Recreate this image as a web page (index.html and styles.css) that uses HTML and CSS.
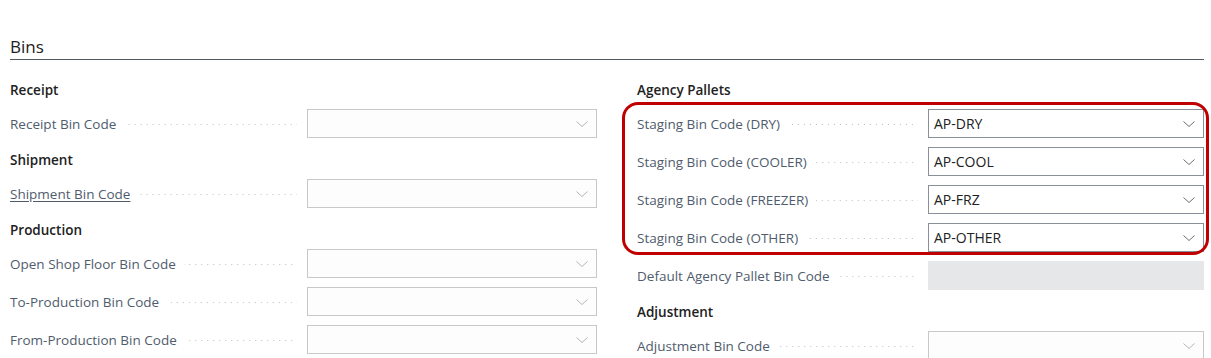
FILE: index.html
```html
<!DOCTYPE html>
<html lang="en">
<head>
<meta charset="utf-8">
<title>Bins</title>
<link rel="stylesheet" href="styles.css">
</head>
<body>
<div class="page">
  <h2 class="section-title">Bins</h2>
  <div class="columns">
    <div class="col col-left">
      <div class="group">
        <div class="group-title">Receipt</div>
        <div class="field">
          <span class="label">Receipt Bin Code</span><span class="leader"></span>
          <div class="input empty"><span class="value"></span><svg class="chev" viewBox="0 0 12 6"><path d="M0.5 0.5 L6 5.5 L11.5 0.5"/></svg></div>
        </div>
      </div>
      <div class="group">
        <div class="group-title">Shipment</div>
        <div class="field">
          <span class="label link">Shipment Bin Code</span><span class="leader"></span>
          <div class="input empty"><span class="value"></span><svg class="chev" viewBox="0 0 12 6"><path d="M0.5 0.5 L6 5.5 L11.5 0.5"/></svg></div>
        </div>
      </div>
      <div class="group">
        <div class="group-title">Production</div>
        <div class="field">
          <span class="label">Open Shop Floor Bin Code</span><span class="leader"></span>
          <div class="input empty"><span class="value"></span><svg class="chev" viewBox="0 0 12 6"><path d="M0.5 0.5 L6 5.5 L11.5 0.5"/></svg></div>
        </div>
        <div class="field">
          <span class="label">To-Production Bin Code</span><span class="leader"></span>
          <div class="input empty"><span class="value"></span><svg class="chev" viewBox="0 0 12 6"><path d="M0.5 0.5 L6 5.5 L11.5 0.5"/></svg></div>
        </div>
        <div class="field">
          <span class="label">From-Production Bin Code</span><span class="leader"></span>
          <div class="input empty"><span class="value"></span><svg class="chev" viewBox="0 0 12 6"><path d="M0.5 0.5 L6 5.5 L11.5 0.5"/></svg></div>
        </div>
      </div>
    </div>
    <div class="col col-right">
      <div class="group">
        <div class="group-title">Agency Pallets</div>
        <div class="highlight">
          <div class="field">
            <span class="label">Staging Bin Code (DRY)</span><span class="leader"></span>
            <div class="input filled"><span class="value">AP-DRY</span><svg class="chev" viewBox="0 0 12 6"><path d="M0.5 0.5 L6 5.5 L11.5 0.5"/></svg></div>
          </div>
          <div class="field">
            <span class="label">Staging Bin Code (COOLER)</span><span class="leader"></span>
            <div class="input filled"><span class="value">AP-COOL</span><svg class="chev" viewBox="0 0 12 6"><path d="M0.5 0.5 L6 5.5 L11.5 0.5"/></svg></div>
          </div>
          <div class="field">
            <span class="label">Staging Bin Code (FREEZER)</span><span class="leader"></span>
            <div class="input filled"><span class="value">AP-FRZ</span><svg class="chev" viewBox="0 0 12 6"><path d="M0.5 0.5 L6 5.5 L11.5 0.5"/></svg></div>
          </div>
          <div class="field">
            <span class="label">Staging Bin Code (OTHER)</span><span class="leader"></span>
            <div class="input filled"><span class="value">AP-OTHER</span><svg class="chev" viewBox="0 0 12 6"><path d="M0.5 0.5 L6 5.5 L11.5 0.5"/></svg></div>
          </div>
        </div>
        <div class="field">
          <span class="label">Default Agency Pallet Bin Code</span><span class="leader"></span>
          <div class="input disabled"><span class="value"></span></div>
        </div>
      </div>
      <div class="group">
        <div class="group-title">Adjustment</div>
        <div class="field">
          <span class="label">Adjustment Bin Code</span><span class="leader"></span>
          <div class="input empty"><span class="value"></span><svg class="chev" viewBox="0 0 12 6"><path d="M0.5 0.5 L6 5.5 L11.5 0.5"/></svg></div>
        </div>
      </div>
    </div>
  </div>
</div>
</body>
</html>
```
FILE: styles.css
```css
* { box-sizing: border-box; }
html, body { margin: 0; padding: 0; background: #ffffff; }
body {
  font-family: "Segoe UI", "Open Sans", "Noto Sans", sans-serif;
  font-size: 14px;
  color: #212121;
  overflow: hidden;
}
.page {
  padding: 35px 7px 0 10px;
}
.section-title {
  margin: 0;
  font-size: 17px;
  font-weight: 400;
  line-height: 24px;
  height: 25px;
  color: #212121;
  border-bottom: 1px solid #505a63;
}
.columns {
  display: grid;
  grid-template-columns: 587px 567px;
  column-gap: 40px;
  padding-top: 20px;
}
.col { display: flex; flex-direction: column; gap: 12px; }
.group { display: flex; flex-direction: column; gap: 9px; }
.group-title {
  font-weight: 600;
  font-size: 13.5px;
  line-height: 20px;
  height: 20px;
  color: #212121;
}
.highlight {
  position: relative;
  display: flex;
  flex-direction: column;
  gap: 9px;
}
.highlight::after {
  content: "";
  position: absolute;
  left: -15px;
  right: -5px;
  top: -7px;
  bottom: -3px;
  border: 3px solid #c00000;
  border-radius: 16px;
  pointer-events: none;
}
.field {
  display: flex;
  align-items: center;
  height: 29px;
}
.label {
  font-size: 13.5px;
  color: #505c6d;
  white-space: nowrap;
  padding-top: 1px;
}
.label.link { text-decoration: underline; text-underline-offset: 2px; }
.leader {
  flex: 1;
  height: 1px;
  margin: 2px 10px 0 8px;
  background-image: linear-gradient(to right, #bcbcbc 1px, transparent 1px);
  background-size: 6px 1px;
  background-repeat: repeat-x;
  background-position: right center;
}
.input {
  height: 29px;
  display: flex;
  align-items: center;
  justify-content: space-between;
  padding: 0 8px 0 5px;
  border: 1px solid #c8c8c8;
  background: #fdfdfd;
}
.col-left .input { width: 290px; }
.col-right .input { width: 276px; }
.input.filled { border-color: #8a9099; background: #ffffff; }
.input.disabled { border-color: #e6e7e9; background: #e6e7e9; }
.value { font-size: 14px; color: #212121; }
.chev {
  width: 12px;
  height: 6px;
  fill: none;
  stroke: #b4b4b4;
  stroke-width: 1;
}
.input.filled .chev { stroke: #6e6e6e; }
```
